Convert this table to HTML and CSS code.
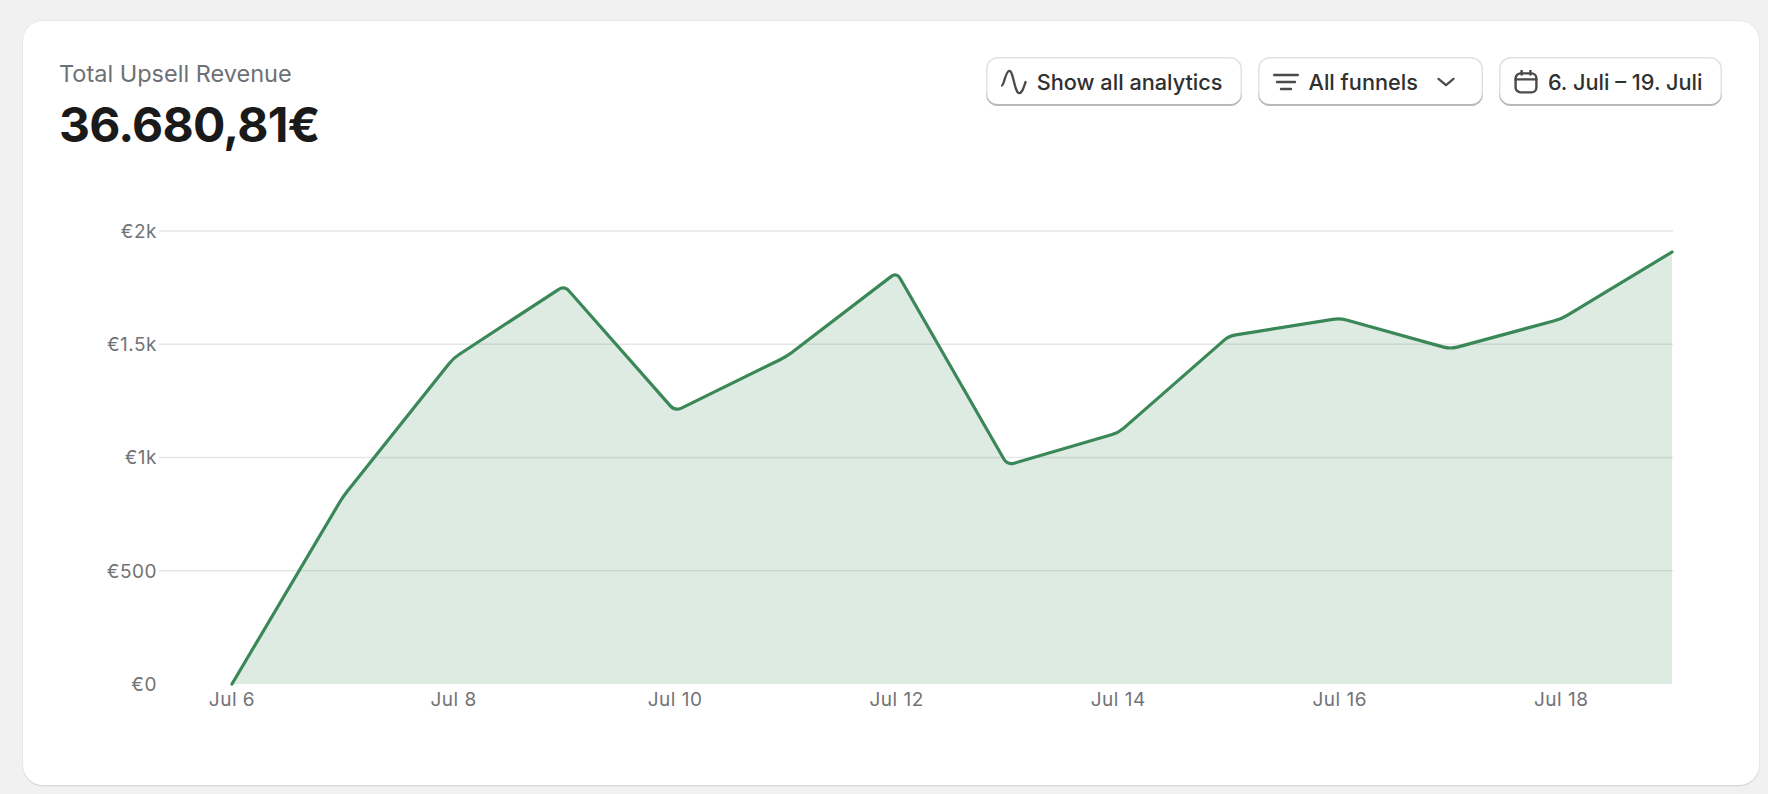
FILE: index.html
```html
<!DOCTYPE html>
<html lang="de">
<head>
<meta charset="utf-8">
<title>Total Upsell Revenue</title>
<link rel="stylesheet" href="styles.css">
</head>
<body>
<div class="card">
  <div class="header">
    <div class="summary">
      <p class="title">Total Upsell Revenue</p>
      <p class="total">36.680,81€</p>
    </div>
    <div class="actions">
      <button class="btn">
        <svg class="icon icon-wave" viewBox="0 0 26 26" width="26" height="26" aria-hidden="true">
          <path d="M1 16.5C3 16 4.6 1.8 8.4 1.8C12.4 1.8 13.6 24.2 18.2 24.2C21.2 24.2 22.6 18.5 24.6 13" fill="none" stroke="#4a4a4a" stroke-width="2.3" stroke-linecap="round" stroke-linejoin="round"/>
        </svg>
        <span>Show all analytics</span>
      </button>
      <button class="btn btn-select">
        <svg class="icon" viewBox="0 0 26 26" width="26" height="26" aria-hidden="true">
          <path d="M1.2 6H24.8M4 13H22M8 20H18" fill="none" stroke="#4a4a4a" stroke-width="2.4" stroke-linecap="round"/>
        </svg>
        <span>All funnels</span>
        <svg class="chevron" viewBox="0 0 18 10" width="18" height="10" aria-hidden="true">
          <path d="M1.5 1.8L9 8.2L16.5 1.8" fill="none" stroke="#4a4a4a" stroke-width="2.2" stroke-linecap="round" stroke-linejoin="round"/>
        </svg>
      </button>
      <button class="btn">
        <svg class="icon icon-cal" viewBox="0 0 24 24" width="24" height="24" aria-hidden="true">
          <rect x="1.6" y="3.4" width="20.8" height="19" rx="5" fill="none" stroke="#4a4a4a" stroke-width="2.4"/>
          <path d="M1.6 9.4H22.4M7.6 0.8V4.6M16.4 0.8V4.6" fill="none" stroke="#4a4a4a" stroke-width="2.4" stroke-linecap="round"/>
        </svg>
        <span>6. Juli – 19. Juli</span>
      </button>
    </div>
  </div>

  <svg class="chart" viewBox="0 0 1664 540" width="1664" height="540" role="img" aria-label="Upsell revenue chart">
    <g class="grid" stroke="#e6e6e6" stroke-width="1.6">
      <line x1="100" y1="41" x2="1614" y2="41"/>
      <line x1="100" y1="154.25" x2="1614" y2="154.25"/>
      <line x1="100" y1="267.5" x2="1614" y2="267.5"/>
      <line x1="100" y1="380.75" x2="1614" y2="380.75"/>
    </g>
    <g class="ylabels" text-anchor="end">
      <text x="98" y="47.8">€2k</text>
      <text x="98" y="161">€1.5k</text>
      <text x="98" y="274.3">€1k</text>
      <text x="98" y="387.5">€500</text>
      <text x="98" y="500.8">€0</text>
    </g>
    <path class="area" d="M173 494L280.2 313.02Q283.77 307 288.13 301.52L390.18 173.48Q394.54 168 400.46 164.26L499.39 99.54Q505.31 95.8 510.04 100.96L611.35 215.89Q616.08 221.05 622.42 218.08L720.51 169.97Q726.85 167 732.48 162.83L831.99 86.62Q837.62 82.45 841.17 88.48L944.84 268.97Q948.39 275 955.14 273.17L1052.41 244.83Q1059.16 243 1064.43 238.39L1164.66 150.61Q1169.93 146 1176.85 144.94L1273.78 129.36Q1280.7 128.3 1287.47 130.07L1384.7 157.13Q1391.47 158.9 1398.24 157.13L1495.47 130.77Q1502.24 129 1508.23 125.38L1613.01 62L1613.01 494Z"/>
    <path class="line" d="M173 494L280.2 313.02Q283.77 307 288.13 301.52L390.18 173.48Q394.54 168 400.46 164.26L499.39 99.54Q505.31 95.8 510.04 100.96L611.35 215.89Q616.08 221.05 622.42 218.08L720.51 169.97Q726.85 167 732.48 162.83L831.99 86.62Q837.62 82.45 841.17 88.48L944.84 268.97Q948.39 275 955.14 273.17L1052.41 244.83Q1059.16 243 1064.43 238.39L1164.66 150.61Q1169.93 146 1176.85 144.94L1273.78 129.36Q1280.7 128.3 1287.47 130.07L1384.7 157.13Q1391.47 158.9 1398.24 157.13L1495.47 130.77Q1502.24 129 1508.23 125.38L1613.01 62"/>
    <g class="xlabels" text-anchor="middle">
      <text x="173" y="516">Jul 6</text>
      <text x="394.54" y="516">Jul 8</text>
      <text x="616.08" y="516">Jul 10</text>
      <text x="837.62" y="516">Jul 12</text>
      <text x="1059.16" y="516">Jul 14</text>
      <text x="1280.7" y="516">Jul 16</text>
      <text x="1502.24" y="516">Jul 18</text>
    </g>
  </svg>
</div>
</body>
</html>
```

FILE: styles.css
```css
* { box-sizing: border-box; }

html, body {
  margin: 0;
  background: #f1f1f1;
}

body {
  padding: 21px 9px 9px 23px;
  font-family: "Inter", "Noto Sans", sans-serif;
  color: #303030;
}

.card {
  background: #ffffff;
  border-radius: 20px;
  height: 764px;
  padding: 36px 36px 0 36px;
  box-shadow: 0 0 0 1px rgba(0, 0, 0, 0.04), 0 1.5px 0 rgba(0, 0, 0, 0.07);
}

.header {
  display: flex;
  justify-content: space-between;
  align-items: flex-start;
}

.summary {
  padding-top: 2px;
}

.title {
  margin: 0;
  font-size: 23.5px;
  line-height: 30px;
  font-weight: 400;
  color: #6d7175;
}

.total {
  margin: 7px 0 0 0;
  font-size: 48px;
  line-height: 58px;
  font-weight: 700;
  letter-spacing: -0.75px;
  color: #1a1a1a;
}

.actions {
  display: flex;
  gap: 16px;
  margin-right: 1px;
}

.btn {
  display: inline-flex;
  align-items: center;
  gap: 10px;
  height: 49px;
  padding: 0 19.5px 0 14.5px;
  border: none;
  border-radius: 12px;
  background: #ffffff;
  font-family: "Inter", "Noto Sans", sans-serif;
  font-size: 21.7px;
  font-weight: 500;
  color: #303030;
  box-shadow: inset 0 -2px 0 0 #b8b8b8, inset 0 0 0 1.5px #e1e1e1;
  cursor: pointer;
}

.btn-select {
  padding-right: 28.5px;
}

.icon {
  display: block;
  flex: none;
}

.chevron {
  display: block;
  flex: none;
  margin-left: 9px;
}

.chart {
  display: block;
  margin-top: 36px;
  overflow: visible;
}

.chart text {
  font-family: "Inter", "Noto Sans", sans-serif;
  font-size: 19px;
  letter-spacing: 0.5px;
  fill: #727376;
}

.area {
  fill: #3a8757;
  fill-opacity: 0.17;
  stroke: none;
}

.line {
  fill: none;
  stroke: #3a8757;
  stroke-width: 3.2;
  stroke-linejoin: round;
  stroke-linecap: round;
}
```
